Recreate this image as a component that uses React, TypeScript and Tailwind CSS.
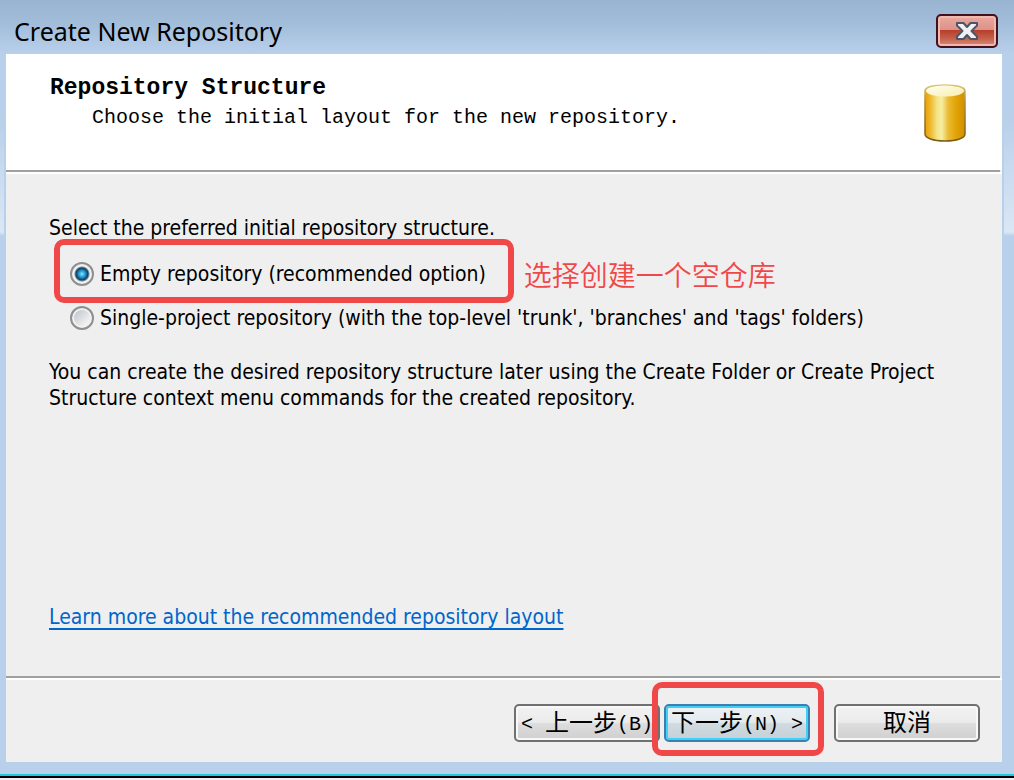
import { useState, type ReactNode } from "react";

const OPTIONS = [
  { id: "empty", label: "Empty repository (recommended option)" },
  {
    id: "single",
    label:
      "Single-project repository (with the top-level 'trunk', 'branches' and 'tags' folders)",
  },
];

const CloseIcon = () => (
  <svg width="24" height="20" viewBox="0 0 24 20">
    <path
      d="M2 2h6.500l3.500 4 3.500-4H22v2.500L16.500 10 22 15.500V18h-6.500L12 14l-3.500 4H2v-2.500L7.500 10 2 4.500Z"
      fill="#eef0f1"
      stroke="#4f5566"
      strokeWidth="2"
      strokeLinejoin="round"
    />
  </svg>
);

const DatabaseIcon = () => (
  <svg width="42" height="58" viewBox="0 0 42 58">
    <defs>
      <linearGradient id="side" x1="0" x2="1" y1="0" y2="0">
        <stop offset="0" stopColor="#e3a30c" />
        <stop offset="0.120" stopColor="#efb424" />
        <stop offset="0.300" stopColor="#f3e488" />
        <stop offset="0.420" stopColor="#f5eea2" />
        <stop offset="0.580" stopColor="#ebbb35" />
        <stop offset="0.780" stopColor="#e2a305" />
        <stop offset="1" stopColor="#cf9002" />
      </linearGradient>
      <linearGradient id="rim" x1="0" x2="0" y1="0" y2="1">
        <stop offset="0" stopColor="#d8c780" />
        <stop offset="0.300" stopColor="#b98a2c" />
        <stop offset="1" stopColor="#7c5a14" />
      </linearGradient>
      <linearGradient id="lid" x1="0" x2="1" y1="0" y2="1">
        <stop offset="0" stopColor="#fffef0" />
        <stop offset="1" stopColor="#f7efae" />
      </linearGradient>
    </defs>
    <path
      d="M1 7v43c0 4 8 7 20 7s20-3 20-7V7C41 3 32 1 21 1S1 3 1 7Z"
      fill="url(#side)"
      stroke="url(#rim)"
      strokeWidth="1.500"
    />
    <ellipse cx="21" cy="7" rx="19" ry="5.500" fill="url(#lid)" />
  </svg>
);

const Divider = () => (
  <div className="border-b-2 border-white">
    <div className="mr-0.5 h-0.5 bg-[#a0a0a0]"></div>
  </div>
);

type WizardButtonProps = {
  primary?: boolean;
  children: ReactNode;
};

const WizardButton = ({ primary, children }: WizardButtonProps) => (
  <button
    type="button"
    className={`flex h-[38px] w-[146px] items-center justify-center whitespace-pre rounded-[5px] border-2 pt-1 font-['Liberation_Mono','Noto_Sans_CJK_SC',monospace] text-xl leading-6 text-black ${
      primary
        ? "border-[#3c7fb1] bg-[linear-gradient(#edf1f4_0%,#e3eaee_48%,#d0dbe1_52%,#c4d0d7_100%)] shadow-[inset_0_0_0_2px_#3fd0f5]"
        : "border-[#707070] bg-[linear-gradient(#f2f2f2_0%,#ebebeb_48%,#dddddd_52%,#cfcfcf_100%)] shadow-[inset_0_0_0_2px_#f8f8f8]"
    }`}
  >
    {children}
  </button>
);

const App = () => {
  const [structure, setStructure] = useState("empty");

  return (
    <div className="flex min-h-screen flex-col bg-[#f4eef2] pb-0.5">
      <div className="flex flex-1 flex-col border-b-2 border-black">
        <div className="flex flex-1 flex-col border-b-2 border-[#22c8e0] bg-[#b9d0ea] bg-[linear-gradient(#99b4d1_0px,#a3bedb_25px,#b9d0ea_54px,#b9d0ea_120px,#dae7f5_232px,#b9d0ea_236px)]">
          {/* title bar */}
          <header className="flex h-[54px] items-center justify-between pl-3.5 pr-4 pt-2">
            <h1 className="font-['Noto_Sans','Open_Sans',sans-serif] text-[25px] leading-8 text-black">
              Create New Repository
            </h1>
            <button
              type="button"
              aria-label="Close"
              className="flex h-[34px] w-[62px] items-center justify-center rounded-[5px] border-2 border-[#43101d] bg-[linear-gradient(#eaa99f_0%,#dd9288_46%,#b83f2a_48%,#c4604c_75%,#d98d7b_100%)] shadow-[inset_0_0_0_2px_#efb9b0]"
            >
              <CloseIcon />
            </button>
          </header>

          <main className="mb-3 ml-1.5 mr-3 flex flex-1 flex-col bg-[#efefef] shadow-[-2px_0_0_#b9d0ea,2px_0_0_#b9d0ea]">
            {/* step heading */}
            <section className="flex justify-between bg-white pb-7 pl-11 pr-9 pt-[21px] font-['Liberation_Mono',monospace] text-black">
              <div>
                <h2 className="text-[23px] font-bold leading-[26px]">Repository Structure</h2>
                <p className="ml-[42px] mt-1 text-xl leading-[26px]">
                  Choose the initial layout for the new repository.
                </p>
              </div>
              <div className="pt-[9px]">
                <DatabaseIcon />
              </div>
            </section>
            <Divider />

            {/* structure options */}
            <section className="flex flex-1 flex-col pb-[46px] pl-[43px] pr-8 pt-[41px] font-['DejaVu_Sans_Condensed','DejaVu_Sans',sans-serif] text-[21px] leading-[26px] text-black">
              <fieldset>
                <legend>Select the preferred initial repository structure.</legend>
                <div className="flex flex-col gap-[18px] pl-[21px] pt-5">
                  {OPTIONS.map((option) => (
                    <div key={option.id} className="flex items-center">
                      <label className="relative flex items-center gap-1.5">
                        <input
                          type="radio"
                          name="structure"
                          value={option.id}
                          checked={structure === option.id}
                          onChange={() => setStructure(option.id)}
                          className="size-6 shrink-0 appearance-none rounded-full border-2 border-[#8e8f8f] bg-[linear-gradient(135deg,#c2c7cd_15%,#f4f4f4_80%)] shadow-[inset_0_0_0_2px_#f1f1f1] checked:bg-[radial-gradient(circle_at_center,#8fe0f8_0px,#22a3d8_3px,#155f8c_5px,#153c58_6px,#e4e6e8_8px)]"
                        />
                        {option.label}
                        {option.id === "empty" && (
                          <span className="pointer-events-none absolute -bottom-4 -left-4 -right-7 -top-[22px] rounded-[10px] border-[6px] border-[#f04848]"></span>
                        )}
                      </label>
                      {option.id === "empty" && (
                        <span className="ml-[38px] font-['Noto_Sans_CJK_SC',sans-serif] text-[28px] font-[350] leading-[26px] text-[#f04848]">
                          选择创建一个空仓库
                        </span>
                      )}
                    </div>
                  ))}
                </div>
              </fieldset>
              <p className="mb-8 mt-7">
                You can create the desired repository structure later using the Create Folder or
                Create Project Structure context menu commands for the created repository.
              </p>
              <a
                href="#layout"
                className="mt-auto self-start text-[#0066cc] underline decoration-2 underline-offset-4"
              >
                Learn more about the recommended repository layout
              </a>
            </section>
            <Divider />

            {/* navigation */}
            <footer className="flex justify-end pb-5 pr-[22px] pt-6">
              <WizardButton>
                {"< "}
                <span className="text-2xl leading-6">上一步</span>(B)
              </WizardButton>
              <div className="relative ml-1 mr-6">
                <WizardButton primary>
                  <span className="text-2xl leading-6">下一步</span>
                  {"(N) >"}
                </WizardButton>
                <span className="pointer-events-none absolute -bottom-3.5 -left-3 -right-3.5 -top-[22px] rounded-[10px] border-[6px] border-[#f04848]"></span>
              </div>
              <WizardButton>
                <span className="text-2xl leading-6">取消</span>
              </WizardButton>
            </footer>
          </main>
        </div>
      </div>
    </div>
  );
};

export default App;
